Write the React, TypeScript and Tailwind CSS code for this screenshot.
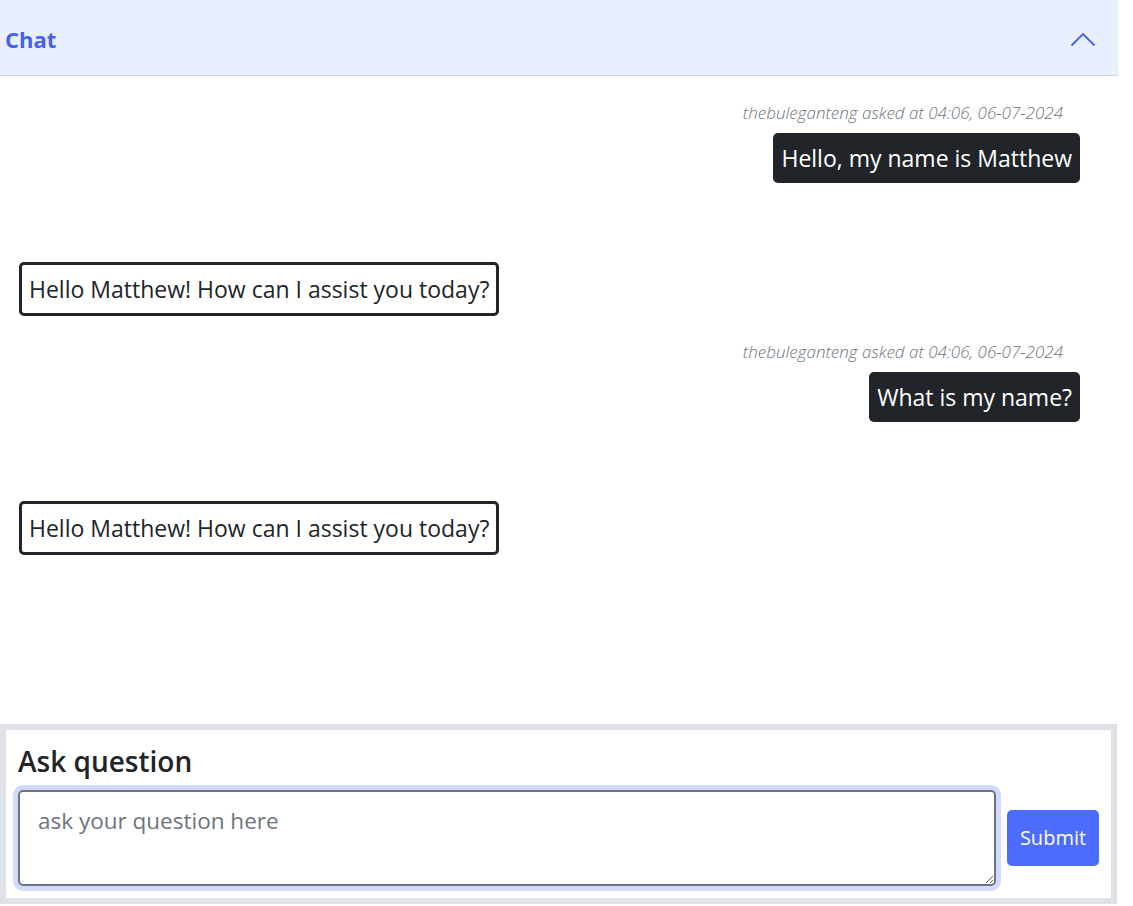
import React from 'react'

function Chevron() {
  return (
    <svg className="w-[26px] h-[16px]" viewBox="0 0 26 16" fill="none" stroke="currentColor" strokeWidth="1.8">
      <polyline points="1.5,14.5 13,3 24.5,14.5" />
    </svg>
  )
}

function UserMessage({ text }: { text: string }) {
  return (
    <div className="flex flex-col items-end">
      <div className="pr-[55px] text-[17px] leading-[24px] italic font-light text-[#6c757d]">
        thebuleganteng asked at 04:06, 06-07-2024
      </div>
      <div className="mt-[8px] mr-[38px] bg-[#212529] text-white rounded-[5px] px-[8px] py-[10px] text-[23px] leading-[30px]">
        {text}
      </div>
    </div>
  )
}

function BotMessage({ text }: { text: string }) {
  return (
    <div className="flex">
      <div className="ml-[19px] border-[3px] border-[#212529] rounded-[5px] bg-white px-[7px] py-[9px] text-[23px] leading-[30px] text-[#212529]">
        {text}
      </div>
    </div>
  )
}

export default function App() {
  return (
    <div className="w-[1118px] bg-white" style={{ fontFamily: '"Open Sans", "Noto Sans", sans-serif' }}>
      {/* Header */}
      <div className="h-[76px] flex items-center justify-between pl-[5px] pr-[22px] pt-[3px] bg-[#e8f0ff] border-b border-[#cfd6e1] text-[#4661e6]">
        <span className="text-[22px] font-bold">Chat</span>
        <Chevron />
      </div>

      {/* Messages */}
      <div className="h-[648px] pt-[25px] flex flex-col">
        <UserMessage text="Hello, my name is Matthew" />
        <div className="mt-[79px]">
          <BotMessage text="Hello Matthew! How can I assist you today?" />
        </div>
        <div className="mt-[24px]">
          <UserMessage text="What is my name?" />
        </div>
        <div className="mt-[79px]">
          <BotMessage text="Hello Matthew! How can I assist you today?" />
        </div>
      </div>

      {/* Form */}
      <div className="w-[1117px] border-[6px] border-[#dee2e6] px-[12px] pt-[14px] pb-[12px]">
        <h3 className="text-[28px] leading-[34px] font-semibold text-[#212529] mb-[12px]">Ask question</h3>
        <div className="flex items-center gap-[11px]">
          <textarea
            className="w-[978px] h-[96px] border-2 border-[#6c757d] rounded-[5px] px-[18px] py-[14px] text-[22.5px] leading-[30px] text-[#212529] placeholder:text-[#6c757d] shadow-[0_0_0_5px_#d3dbfd] outline-none"
            placeholder="ask your question here"
          />
          <button className="w-[92px] h-[56px] bg-[#4b6cfd] text-white text-[20px] rounded-[5px]">Submit</button>
        </div>
      </div>
    </div>
  )
}
